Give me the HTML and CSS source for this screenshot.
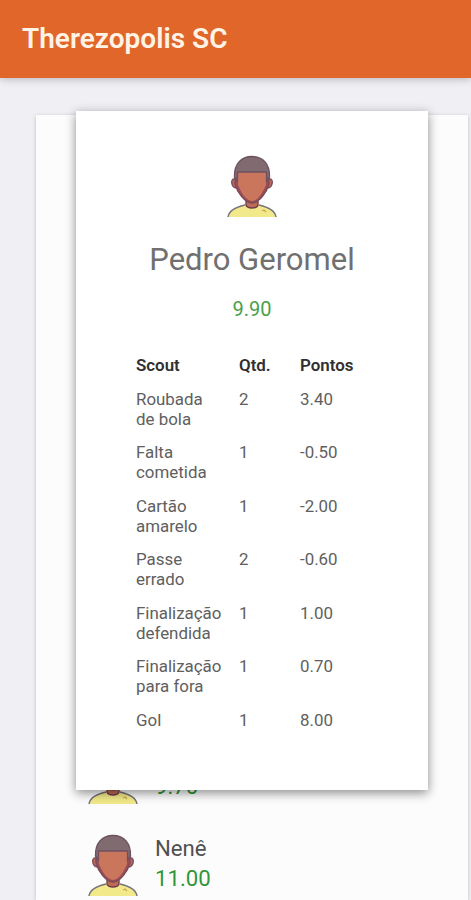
FILE: index.html
```html
<!DOCTYPE html>
<html lang="pt-BR">
<head>
    <meta charset="UTF-8">
    <title>Therezopolis SC</title>
    <meta name="viewport" content="width=device-width, initial-scale=1.0">
    <link rel="stylesheet" href="styles.css">
</head>
<body>
    <svg width="0" height="0" class="defs">
        <symbol id="avatar" viewBox="0 0 50 62">
            <path d="M2 62C2 55 9 52 18 50L19 47H31L32 50C41 52 48 55 48 62Z" fill="#f2e98a"/>
            <path d="M1 62C2 55 9 52 18 50M32 50C41 52 48 55 49 62" fill="none" stroke="#77717a" stroke-width="1.4"/>
            <path d="M19 43V50C20 54 30 54 31 50V43Z" fill="#bd6b56" stroke="#713d4b" stroke-width="1.3"/>
            <path d="M8 24C3 23 4 32 9 33M42 24C47 23 46 32 41 33" fill="#bd6959" stroke="#794c5b" stroke-width="1.4"/>
            <path d="M8 17H42V29C40 37 32 48 25 48S10 37 8 29Z" fill="#9c4c54" stroke="#7c4a58" stroke-width="1.3"/>
            <path d="M10.500 17H39.500L39 30C36 37 31 46 25 46S14 37 11 30Z" fill="#c9765c"/>
            <path d="M7.500 22C7 9 14 1.500 25 1.500S43 9 42.500 22L39.500 26V17H10.500V26Z" fill="#806b71" stroke="#6d5060" stroke-width="1.3"/>
            <path d="M35 56L37 55L39 57" fill="none" stroke="#c9ab55" stroke-width="1.2"/>
        </symbol>
    </svg>

    <header class="navbar">
        <h1>Therezopolis SC</h1>
    </header>

    <div class="card">
        <div class="player">
            <svg class="avatar"><use href="#avatar"/></svg>
            <div class="info">
                <div class="name">Geromel</div>
                <div class="score">9.70</div>
            </div>
        </div>
        <div class="player">
            <svg class="avatar"><use href="#avatar"/></svg>
            <div class="info">
                <div class="name">Nenê</div>
                <div class="score">11.00</div>
            </div>
        </div>
    </div>

    <div class="modal">
        <svg class="avatar"><use href="#avatar"/></svg>
        <h2>Pedro Geromel</h2>
        <div class="total">9.90</div>
        <table>
            <thead>
                <tr><th class="scout">Scout</th><th class="qtd">Qtd.</th><th>Pontos</th></tr>
            </thead>
            <tbody>
                <tr><td>Roubada<br>de bola</td><td>2</td><td>3.40</td></tr>
                <tr><td>Falta<br>cometida</td><td>1</td><td>-0.50</td></tr>
                <tr><td>Cartão<br>amarelo</td><td>1</td><td>-2.00</td></tr>
                <tr><td>Passe<br>errado</td><td>2</td><td>-0.60</td></tr>
                <tr><td>Finalização<br>defendida</td><td>1</td><td>1.00</td></tr>
                <tr><td>Finalização<br>para fora</td><td>1</td><td>0.70</td></tr>
                <tr><td>Gol</td><td>1</td><td>8.00</td></tr>
            </tbody>
        </table>
    </div>
</body>
</html>
```
FILE: styles.css
```css
* {
    box-sizing: border-box;
}

body {
    position: relative;
    height: 900px;
    margin: 0;
    overflow: hidden;
    background-color: #efeff4;
    font-family: Roboto, sans-serif;
}

.defs {
    position: absolute;
}

.navbar {
    display: flex;
    align-items: center;
    height: 78px;
    padding: 0 22px 1px;
    background-color: #e1662a;
    box-shadow: 0 1px 8px rgba(0,0,0,0.25);
}

.navbar h1 {
    margin: 0;
    color: #fff3e6;
    font-size: 28px;
    font-weight: 600;
}

.card {
    width: 432px;
    height: 785px;
    margin: 37px 0 0 36px;
    padding: 627px 52px 0;
    background-color: #fcfcfc;
    box-shadow: 0 1px 4px rgba(0,0,0,0.2);
}

.player {
    display: flex;
    height: 92px;
}

.avatar {
    display: block;
    width: 50px;
    height: 62px;
}

.info {
    margin: -1px 0 0 17px;
    font-size: 22.2px;
    line-height: 30px;
}

.name {
    color: #505050;
}

.score {
    color: #309638;
}

.modal {
    position: absolute;
    top: 111px;
    left: 76px;
    width: 352px;
    height: 679px;
    padding: 44px 60px 0;
    background-color: #fff;
    box-shadow: 0 3px 10px rgba(0,0,0,0.45);
}

.modal .avatar {
    margin: 0 auto;
}

.modal h2 {
    margin: 23px -30px 0;
    color: #707070;
    font-size: 31px;
    font-weight: 400;
    line-height: 40px;
    text-align: center;
}

.total {
    margin-top: 17px;
    color: #48a04b;
    font-size: 20px;
    line-height: 24px;
    text-align: center;
}

table {
    width: 232px;
    margin-top: 28px;
    border-collapse: collapse;
    table-layout: fixed;
    font-size: 16.9px;
    line-height: 19.75px;
    text-align: left;
}

th, td {
    padding: 7px 0;
    vertical-align: top;
}

th {
    color: #303030;
    font-weight: 600;
}

td {
    color: #606060;
}

.scout {
    width: 103px;
}

.qtd {
    width: 61px;
}
```
